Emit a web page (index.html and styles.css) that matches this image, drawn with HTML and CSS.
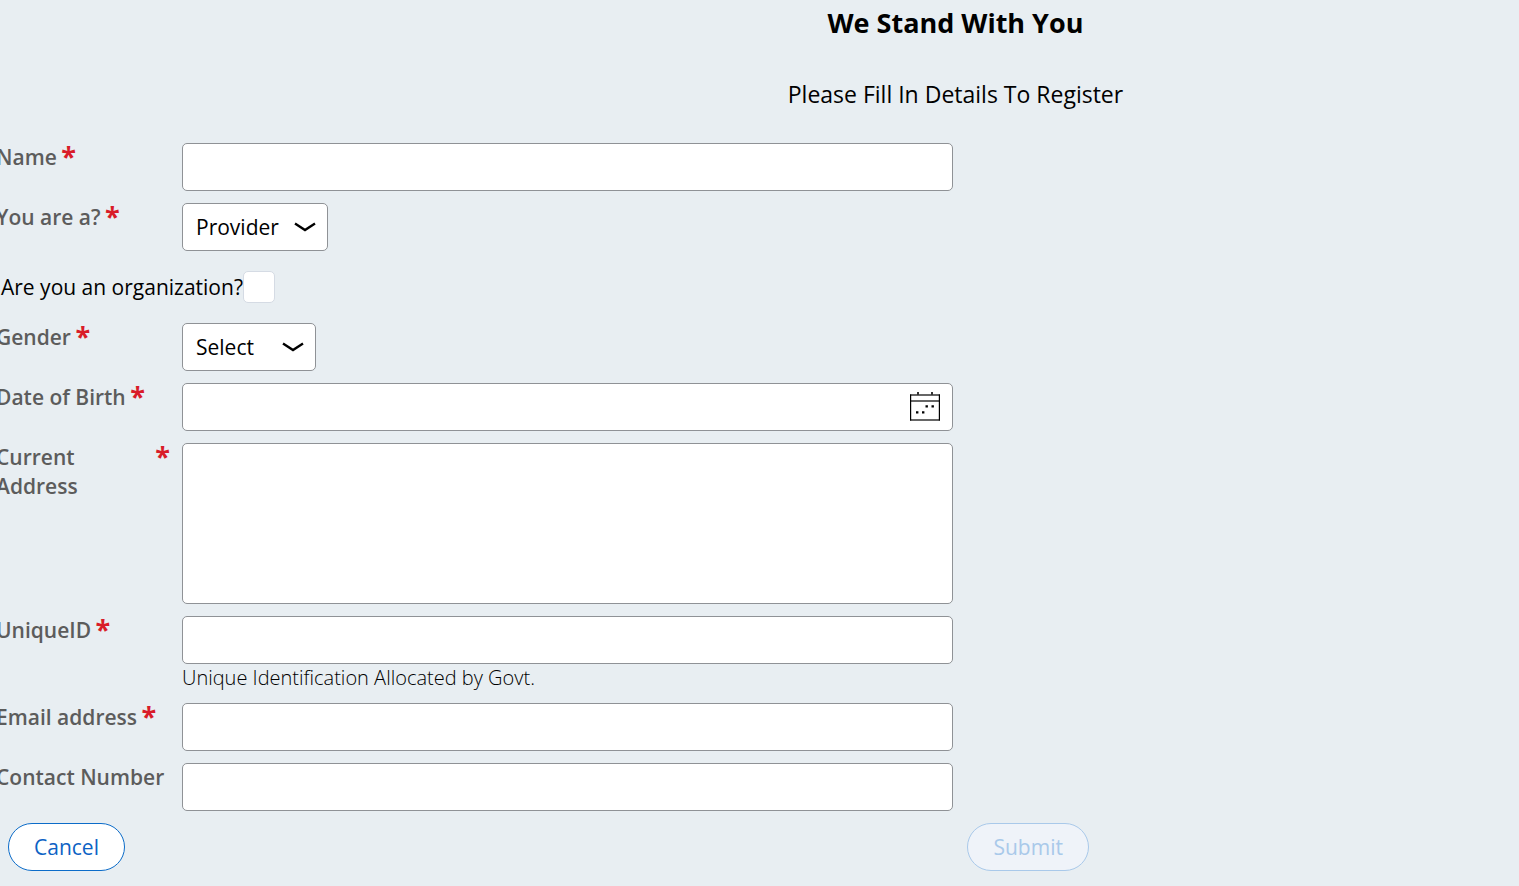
FILE: index.html
```html
<!DOCTYPE html>
<html lang="en">
<head>
  <meta charset="UTF-8" />
  <meta name="viewport" content="width=device-width, initial-scale=1.0"/>
  <title>We Stand With You</title>
  <link rel="stylesheet" href="styles.css">
</head>
<body>

  <div class="page">
    <h1>We Stand With You</h1>
    <h2>Please Fill In Details To Register</h2>

    <form>
      <div class="fields">
        <div class="row">
          <label for="name">Name <span class="required">*</span></label>
          <input type="text" id="name" required />
        </div>

        <div class="row">
          <label for="role">You are a? <span class="required">*</span></label>
          <div class="select-box">
            <select id="role">
              <option>Provider</option>
              <option>Seeker</option>
            </select>
            <svg class="chevron" viewBox="0 0 22 12"><path d="M1 2.5 L11 9 L21 2.5" /></svg>
          </div>
        </div>

        <div class="check-row">
          <label for="organization">Are you an organization?</label>
          <input type="checkbox" id="organization" />
        </div>

        <div class="row">
          <label for="gender">Gender <span class="required">*</span></label>
          <div class="select-box">
            <select id="gender" class="short">
              <option>Select</option>
              <option>Male</option>
              <option>Female</option>
              <option>Other</option>
            </select>
            <svg class="chevron" viewBox="0 0 22 12"><path d="M1 2.5 L11 9 L21 2.5" /></svg>
          </div>
        </div>

        <div class="row">
          <label for="birth">Date of Birth <span class="required">*</span></label>
          <div class="date-box">
            <input type="text" id="birth" required />
            <button type="button" class="calendar" aria-label="Choose date">
              <svg viewBox="0 0 30 30">
                <path class="bars" d="M0 3 H30 M0 9 H30 M0 28 H30" />
                <path class="frame" d="M.6 2.5 V28.5 M29.4 2.5 V28.5" />
                <path class="pins" d="M8 0 V3 M22 0 V3" />
                <path class="dots" d="M15.5 13.2h2.4v2.4h-2.4z M21.5 13.2h2.4v2.4h-2.4z M6 19.2h2.4v2.4h-2.4z M12 19.2h2.4v2.4h-2.4z" />
              </svg>
            </button>
          </div>
        </div>

        <div class="row">
          <label for="address" class="wrap"><span>Current Address</span> <span class="required">*</span></label>
          <textarea id="address" required></textarea>
        </div>

        <div class="row">
          <label for="uniqueId">UniqueID <span class="required">*</span></label>
          <div>
            <input type="text" id="uniqueId" aria-describedby="uniqueIdHint" required />
            <p class="hint" id="uniqueIdHint">Unique Identification Allocated by Govt.</p>
          </div>
        </div>

        <div class="row">
          <label for="email">Email address <span class="required">*</span></label>
          <input type="email" id="email" required />
        </div>

        <div class="row">
          <label for="contact">Contact Number</label>
          <input type="tel" id="contact" />
        </div>
      </div>

      <div class="actions">
        <div><button type="button" class="pill">Cancel</button></div>
        <div><button type="submit" class="pill" disabled>Submit</button></div>
      </div>
    </form>
  </div>

</body>
</html>
```
FILE: styles.css
```css
* {
  box-sizing: border-box;
}
body {
  margin: 0;
  background: #e8eef2;
  color: #000;
  font-family: "Open Sans", sans-serif;
  font-size: 21px;
  line-height: 29px;
  overflow: hidden;
}
/* the form is wider than the window and sits slightly past its left edge */
.page {
  width: calc(126vw + 5px);
  margin-left: -4px;
  padding-bottom: 15px;
}
h1, h2 {
  margin: 0;
  text-align: center;
}
h1 {
  padding-top: 4px;
  font-size: 27px;
  line-height: 38px;
  font-weight: 700;
}
h2 {
  padding: 36px 0 33px;
  font-size: 23px;
  line-height: 32px;
  font-weight: 500;
}
.fields {
  display: flex;
  flex-direction: column;
  gap: 12px;
  width: 50%;
  padding-right: 2px;
}
.row {
  display: grid;
  grid-template-columns: 174px 1fr;
  column-gap: 12px;
  align-items: start;
}
.row label {
  color: #5c5c5c;
  font-weight: 600;
}
.row .wrap {
  display: flex;
  justify-content: space-between;
}
.wrap span:first-child {
  width: min-content;
}
.required {
  color: #d91c29;
  font-size: 27px;
  font-weight: 700;
  line-height: 25px;
  margin-left: -1px;
  vertical-align: top;
}
input, select, textarea {
  display: block;
  width: 100%;
  height: 48px;
  margin: 0;
  padding: 0 13px;
  background: #fff;
  border: 1px solid #8f9296;
  border-radius: 5px;
  color: #000;
  font: inherit;
}
textarea {
  height: 161px;
  padding: 9px 13px;
  resize: none;
}
.select-box {
  position: relative;
  justify-self: start;
}
select {
  appearance: none;
  width: 146px;
}
select.short {
  width: 134px;
}
.chevron {
  position: absolute;
  top: 18px;
  right: 12px;
  width: 22px;
  height: 12px;
  fill: none;
  stroke: #000;
  stroke-width: 2.4;
  pointer-events: none;
}
.check-row {
  display: flex;
  align-items: center;
  height: 48px;
  padding-left: 5px;
}
.check-row input {
  appearance: none;
  width: 32px;
  height: 32px;
  padding: 0;
  border-color: #d5dbe4;
}
.date-box {
  position: relative;
}
.calendar {
  position: absolute;
  top: 9px;
  right: 13px;
  width: 30px;
  height: 30px;
  padding: 0;
  background: none;
  border: none;
  cursor: pointer;
}
.calendar svg {
  display: block;
}
.frame {
  stroke: #000;
  stroke-width: 1.2;
}
.bars {
  stroke: #666;
  stroke-width: 2;
}
.pins {
  stroke: #333;
  stroke-width: 2;
}
.hint {
  margin: 0;
  color: #000;
  font-size: 20px;
  line-height: 27px;
  font-weight: 300;
}
.actions {
  display: grid;
  grid-template-columns: 1fr 1fr;
  padding-top: 12px;
}
.actions div {
  padding-left: 12px;
}
.pill {
  height: 48px;
  padding: 0 25px;
  background: #fff;
  border: 1px solid #0c6cc9;
  border-radius: 24px;
  color: #0c62c4;
  font: inherit;
  cursor: pointer;
}
.pill:disabled {
  background: #eff3f9;
  border-color: #a9c9ea;
  color: #a9c9ea;
  cursor: default;
}
```
